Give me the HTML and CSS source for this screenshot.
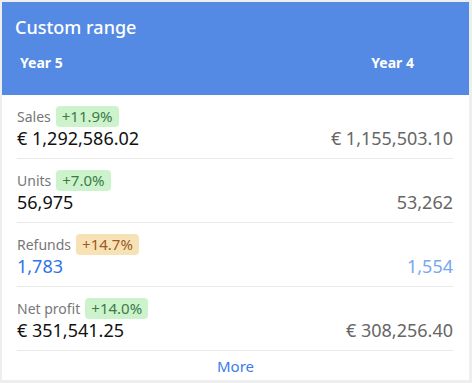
FILE: index.html
```html
<!DOCTYPE html>
<html lang="en">
<head>
<meta charset="utf-8">
<title>Custom range</title>
<link rel="stylesheet" href="styles.css">
</head>
<body>
<div class="card">
  <div class="card-head">
    <div class="title">Custom range</div>
    <div class="years">
      <span class="year">Year 5</span>
      <span class="year year-prev">Year 4</span>
    </div>
  </div>
  <div class="rows">
    <div class="row">
      <div class="label-line"><span class="label">Sales</span><span class="badge up">+11.9%</span></div>
      <div class="value-line"><span class="value">€ 1,292,586.02</span><span class="value prev">€ 1,155,503.10</span></div>
    </div>
    <div class="row">
      <div class="label-line"><span class="label">Units</span><span class="badge up">+7.0%</span></div>
      <div class="value-line"><span class="value">56,975</span><span class="value prev">53,262</span></div>
    </div>
    <div class="row">
      <div class="label-line"><span class="label">Refunds</span><span class="badge warn">+14.7%</span></div>
      <div class="value-line"><span class="value link">1,783</span><span class="value prev link-light">1,554</span></div>
    </div>
    <div class="row">
      <div class="label-line"><span class="label">Net profit</span><span class="badge up">+14.0%</span></div>
      <div class="value-line"><span class="value">€ 351,541.25</span><span class="value prev">€ 308,256.40</span></div>
    </div>
  </div>
  <div class="more"><a class="more-link" href="#">More</a></div>
</div>
</body>
</html>
```

FILE: styles.css
```css
html, body {
  margin: 0;
  padding: 0;
}
body {
  background: #eeeeee;
  font-family: "Noto Sans", "Open Sans", sans-serif;
  padding: 2px 3px 3px 2px;
  width: 472px;
  height: 383px;
  box-sizing: border-box;
}
.card {
  background: #ffffff;
  height: 378px;
  display: flex;
  flex-direction: column;
}
.card-head {
  background: #548ae3;
  color: #ffffff;
  height: 93px;
  box-sizing: border-box;
  padding: 12px 0 0 13px;
}
.title {
  font-size: 18px;
  line-height: 26px;
  font-weight: 500;
}
.years {
  display: flex;
  justify-content: space-between;
  padding: 14px 55px 0 5px;
}
.year {
  font-size: 14px;
  font-weight: 700;
  line-height: 18px;
}
.rows {
  padding: 0 16px 0 15px;
}
.row {
  padding: 11px 0 9px;
  border-bottom: 1px solid #e9e9e9;
}
.label-line {
  display: flex;
  align-items: center;
  height: 21px;
  gap: 5px;
}
.label {
  font-size: 14px;
  color: #777777;
}
.badge {
  font-size: 15px;
  line-height: 21px;
  padding: 0 6px;
  border-radius: 4px;
}
.badge.up {
  background: #cdf3cd;
  color: #3c7b46;
}
.badge.warn {
  background: #f7e2b5;
  color: #9b5a28;
}
.value-line {
  display: flex;
  justify-content: space-between;
  line-height: 22px;
}
.value {
  font-size: 18px;
  color: #111111;
}
.value.prev {
  color: #666666;
}
.value.link {
  color: #2f73ec;
}
.value.link-light {
  color: #79a7f1;
}
.more {
  text-align: center;
  padding-top: 5px;
  line-height: 20px;
}
.more-link {
  font-size: 15px;
  color: #3b7ce9;
  text-decoration: none;
}
```
